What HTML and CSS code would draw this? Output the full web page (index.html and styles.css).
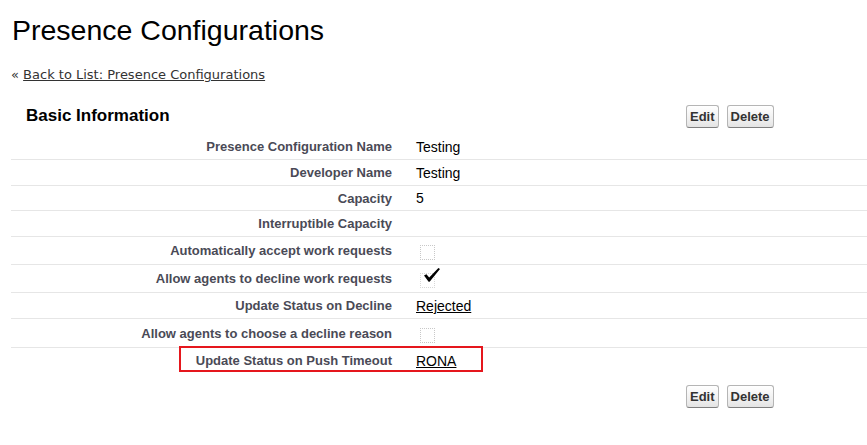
FILE: index.html
```html
<!DOCTYPE html>
<html>
<head>
<meta charset="utf-8">
<link rel="stylesheet" href="styles.css">
</head>
<body>
<div class="page">
  <h1 class="title">Presence Configurations</h1>
  <div class="back">&laquo; <a href="#">Back to List: Presence Configurations</a></div>
  <div class="block">
    <div class="bar">
      <h2 class="bar-title">Basic Information</h2>
      <div class="btns"><button class="btn">Edit</button><button class="btn">Delete</button></div>
    </div>
    <div class="rows">
      <div class="row"><div class="lbl">Presence Configuration Name</div><div class="val">Testing</div></div>
      <div class="row"><div class="lbl">Developer Name</div><div class="val">Testing</div></div>
      <div class="row short"><div class="lbl">Capacity</div><div class="val">5</div></div>
      <div class="row"><div class="lbl">Interruptible Capacity</div><div class="val"></div></div>
      <div class="row tall"><div class="lbl">Automatically accept work requests</div><div class="val"><span class="cb"></span></div></div>
      <div class="row tall"><div class="lbl">Allow agents to decline work requests</div><div class="val"><span class="cb checked"><svg class="tick" width="18" height="16" viewBox="0 0 18 16"><path d="M1 8.4 L3.4 7.2 L6.2 10.6 L15.4 1 L17 2 L6.6 14.8 L5.6 14.8 Z" fill="#000"/></svg></span></div></div>
      <div class="row"><div class="lbl">Update Status on Decline</div><div class="val"><a href="#" class="vlink">Rejected</a></div></div>
      <div class="row tall2"><div class="lbl">Allow agents to choose a decline reason</div><div class="val"><span class="cb"></span></div></div>
      <div class="row last"><div class="lbl">Update Status on Push Timeout</div><div class="val"><a href="#" class="vlink">RONA</a></div><span class="mark"></span></div>
    </div>
    <div class="bar bottom">
      <div class="bar-title"></div>
      <div class="btns"><button class="btn">Edit</button><button class="btn">Delete</button></div>
    </div>
  </div>
</div>
</body>
</html>
```

FILE: styles.css
```css
html, body {
  margin: 0;
  padding: 0;
  background: #fff;
}
.page {
  padding-left: 10px;
  font-family: "Liberation Sans", Arial, sans-serif;
  color: #000;
}
.title {
  margin: 14px 0 0 2px;
  font-size: 28.5px;
  line-height: 32px;
  font-weight: normal;
  color: #000;
}
.back {
  margin-top: 21px;
  font-family: "DejaVu Sans", Verdana, sans-serif;
  font-size: 13px;
  line-height: 16px;
  color: #333;
  padding-left: 1px;
}
.back a {
  color: #333;
  text-decoration: underline;
}
.block {
  margin-top: 18px;
  margin-left: 1px;
}
.bar {
  display: grid;
  grid-template-columns: 675px auto;
  align-items: center;
  height: 30px;
  margin-bottom: 3px;
}
.bar.bottom {
  margin-top: 8px;
  margin-bottom: 0;
}
.bar-title {
  margin: 0;
  padding-left: 15px;
  font-size: 17px;
  font-weight: bold;
  color: #000;
}
.btns {
  display: flex;
  gap: 8px;
}
.btn {
  font-family: "Liberation Sans", Arial, sans-serif;
  font-size: 13px;
  font-weight: bold;
  color: #333;
  height: 23px;
  padding: 0 3px;
  margin: 0;
  border: 1px solid #b5b5b5;
  border-bottom-color: #7f7f7f;
  border-radius: 3px;
  background: linear-gradient(#ffffff, #f0f0f0 60%, #e4e4e4);
}
.rows {
  display: flex;
  flex-direction: column;
}
.row {
  position: relative;
  display: grid;
  grid-template-columns: 393px 1fr;
  align-items: center;
  height: 25px;
  border-bottom: 1px solid #e6e6e6;
}
.row.short { height: 24px; }
.row.tall { height: 27px; }
.row.tall2 { height: 28px; }
.row.last { border-bottom: none; }
.lbl {
  padding-right: 12px;
  text-align: right;
  font-size: 13px;
  font-weight: bold;
  color: #4a4a56;
  white-space: nowrap;
}
.val {
  padding-left: 12px;
  font-size: 14px;
  color: #000;
  display: flex;
  align-items: center;
}
.vlink {
  color: #000;
  text-decoration: underline;
}
.cb {
  position: relative;
  display: inline-block;
  width: 13px;
  height: 13px;
  margin-left: 4px;
  margin-top: 4px;
  border: 1px dotted #c8c8c8;
}
.cb.checked {
  border-color: #d8d8d8;
}
.tick {
  position: absolute;
  left: 2px;
  top: -7px;
}
.mark {
  position: absolute;
  left: 168px;
  top: -2px;
  width: 300px;
  height: 22px;
  border: 2px solid #e5171d;
}
```
